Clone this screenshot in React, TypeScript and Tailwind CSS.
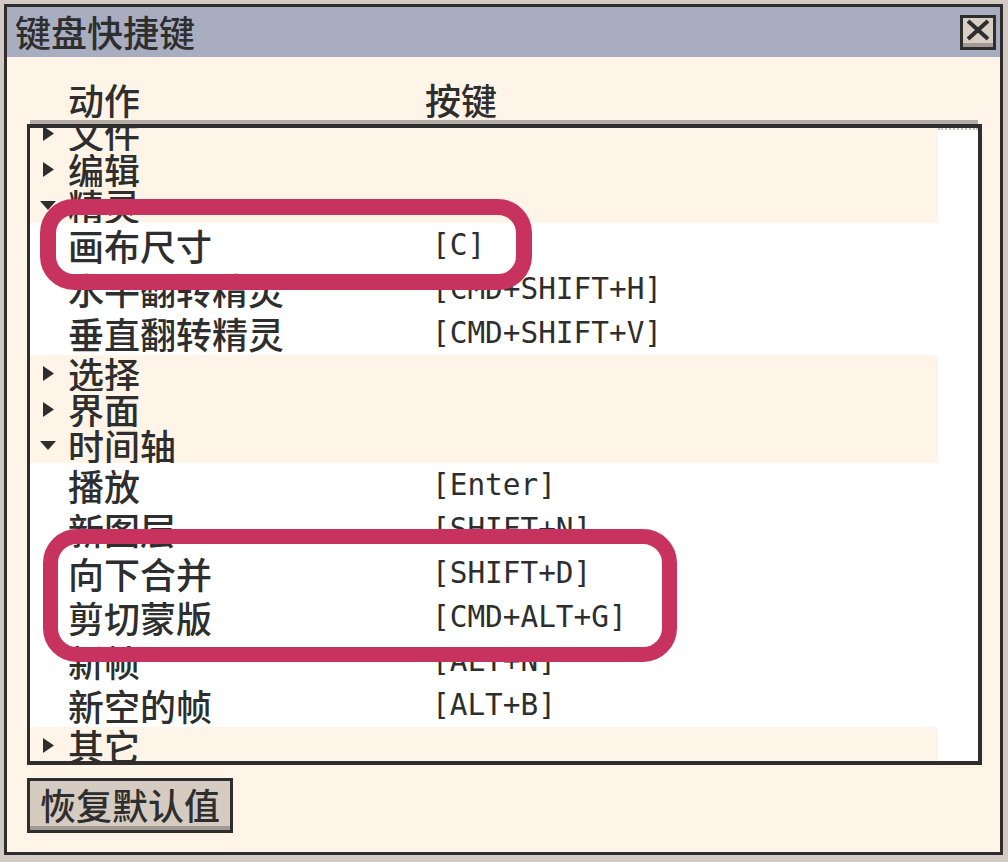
import React from "react";

type Row =
  | { kind: "cat"; name: string; open?: boolean }
  | { kind: "item"; name: string; key: string };

const rows: Row[] = [
  { kind: "cat", name: "文件" },
  { kind: "cat", name: "编辑" },
  { kind: "cat", name: "精灵", open: true },
  { kind: "item", name: "画布尺寸", key: "[C]" },
  { kind: "item", name: "水平翻转精灵", key: "[CMD+SHIFT+H]" },
  { kind: "item", name: "垂直翻转精灵", key: "[CMD+SHIFT+V]" },
  { kind: "cat", name: "选择" },
  { kind: "cat", name: "界面" },
  { kind: "cat", name: "时间轴", open: true },
  { kind: "item", name: "播放", key: "[Enter]" },
  { kind: "item", name: "新图层", key: "[SHIFT+N]" },
  { kind: "item", name: "向下合并", key: "[SHIFT+D]" },
  { kind: "item", name: "剪切蒙版", key: "[CMD+ALT+G]" },
  { kind: "item", name: "新帧", key: "[ALT+N]" },
  { kind: "item", name: "新空的帧", key: "[ALT+B]" },
  { kind: "cat", name: "其它" },
];

const cjk = { fontFamily: '"Noto Sans CJK SC", "Noto Sans", sans-serif' };
const mono = { fontFamily: '"DejaVu Sans Mono", "Liberation Mono", monospace' };

function Tri({ open }: { open?: boolean }) {
  if (open) {
    return (
      <svg width="16" height="9" viewBox="0 0 16 9" className="ml-[10px]">
        <polygon points="0,0 16,0 8,9" fill="#2e2e2e" />
      </svg>
    );
  }
  return (
    <svg width="11" height="15" viewBox="0 0 11 15" className="ml-[13px]">
      <polygon points="0,0 11,7.5 0,15" fill="#2e2e2e" />
    </svg>
  );
}

export default function App() {
  return (
    <div className="w-[1008px] h-[862px] bg-[#d3cbc3] overflow-hidden relative font-medium" style={cjk}>
      <div className="ml-[4px] mt-[4px] w-[999px] h-[851px] border-[3px] border-[#2e2e2e] bg-[#fff4e8] flex flex-col text-[#2e2e2e]">
        {/* title bar */}
        <div className="h-[50px] bg-[#a8adbf] flex items-center justify-between pl-[8px] pr-[4px] shrink-0">
          <div className="text-[36px] leading-[36px] -mt-[2px]">键盘快捷键</div>
          <div className="w-[36px] h-[35px] border-[3px] border-[#2e2e2e] bg-[#d8cec4] flex flex-col">
            <div className="flex-1 flex items-center justify-center">
              <svg width="24" height="22" viewBox="0 0 24 22">
                <line x1="2" y1="2" x2="22" y2="20" stroke="#2e2e2e" strokeWidth="4" />
                <line x1="22" y1="2" x2="2" y2="20" stroke="#2e2e2e" strokeWidth="4" />
              </svg>
            </div>
            <div className="h-[4px] bg-[#a39b93]" />
          </div>
        </div>

        {/* header */}
        <div className="h-[63px] shrink-0 flex pt-[24px]">
          <div className="w-[418px] pl-[61px] text-[36px] leading-[36px]">动作</div>
          <div className="text-[36px] leading-[36px]">按键</div>
        </div>

        {/* list */}
        <div className="ml-[20px] mr-[18px] flex flex-col shrink-0">
          <div className="h-[4px] bg-[#b5ada5] ml-[3px] mr-[4px]" />
          <div className="h-[641px] border-t-[4px] border-l-[3px] border-r-[4px] border-b-[4px] border-[#2e2e2e] bg-white flex overflow-hidden">
            <div className="flex-1 overflow-hidden">
              <div className="-mt-[13px] flex flex-col">
                {rows.map((r, i) =>
                  r.kind === "cat" ? (
                    <div key={i} className="h-[36px] bg-[#fff4e8] flex items-center">
                      <div className="w-[38px] flex items-center">
                        <Tri open={r.open} />
                      </div>
                      <div className="text-[36px] leading-[36px]">{r.name}</div>
                    </div>
                  ) : (
                    <div key={i} className="h-[44px] bg-white flex items-center">
                      <div className="w-[38px]" />
                      <div className="w-[364px] text-[36px] leading-[36px]">{r.name}</div>
                      <div className="text-[29.4px] leading-[36px] font-normal" style={mono}>
                        {r.key}
                      </div>
                    </div>
                  )
                )}
              </div>
            </div>
            <div className="w-[40px] bg-white border-t-[2px] border-dotted border-[#c8c0b8]" />
          </div>
        </div>

        {/* button */}
        <div className="pl-[20px] pt-[13px]">
          <div className="w-[206px] h-[55px] border-[3px] border-[#2e2e2e] bg-[#d6cbc1] flex flex-col">
            <div className="flex-1 flex items-center justify-center text-[36px] leading-[36px]">恢复默认值</div>
            <div className="h-[4px] bg-[#a39b93]" />
          </div>
        </div>
      </div>

      {/* annotation overlays */}
      <div className="absolute left-[40px] top-[199px] w-[492px] h-[91px] border-[16px] border-[#c8325e] rounded-[34px]" />
      <div className="absolute left-[43px] top-[529px] w-[634px] h-[133px] border-[15px] border-[#c8325e] rounded-[34px]" />
    </div>
  );
}
